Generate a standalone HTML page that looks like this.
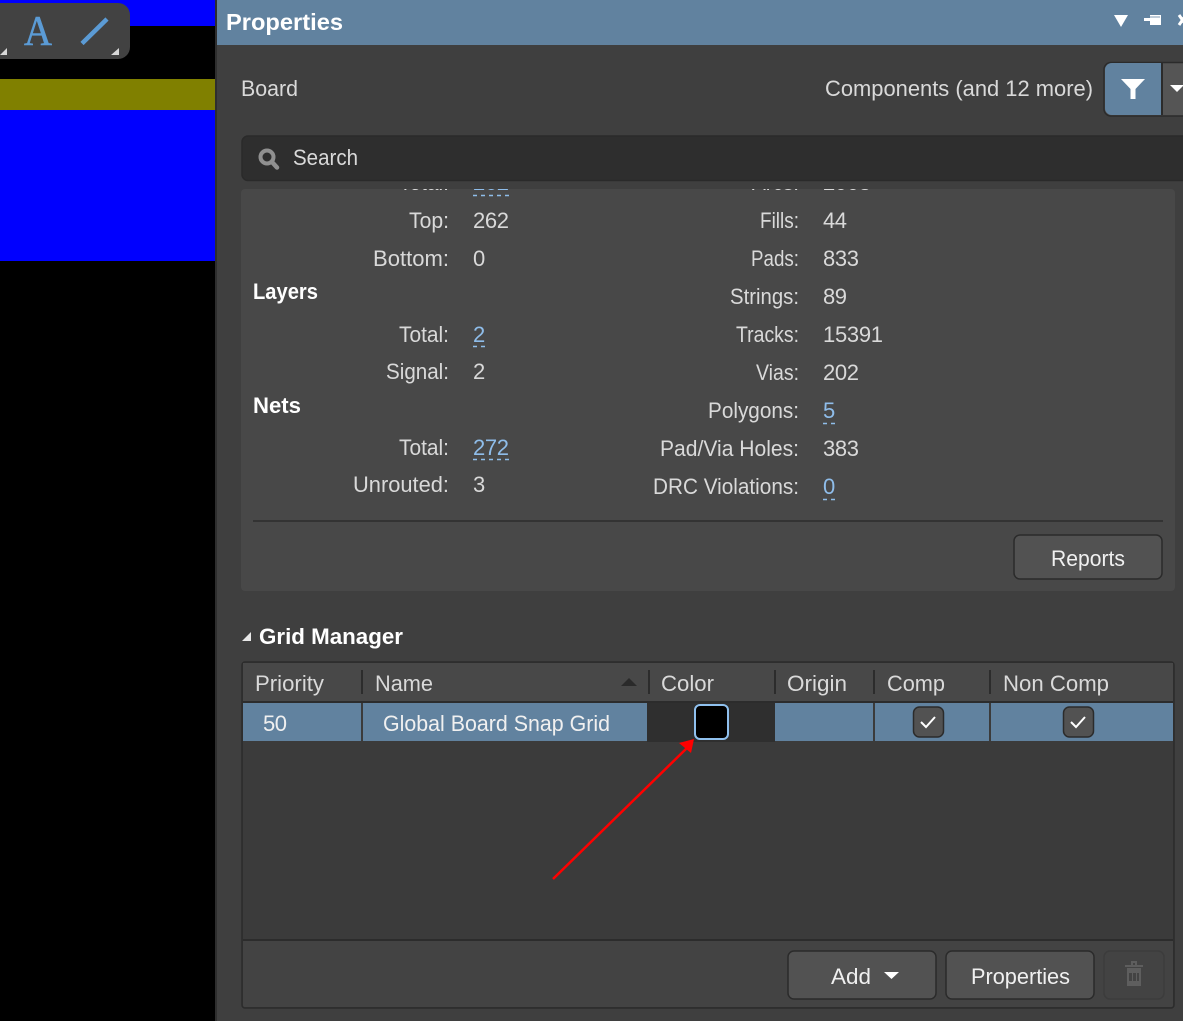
<!DOCTYPE html>
<html><head><meta charset="utf-8"><style>
html,body{margin:0;padding:0;background:#000;width:1183px;height:1021px;overflow:hidden}
svg{display:block}
text{font-family:"Liberation Sans",sans-serif;font-size:22px;fill:#d9d9d9}
.e{text-anchor:end}
.b{font-weight:bold;fill:#fff}
.l{fill:#8fbdea}
.w{fill:#f0f0f0}
</style></head><body>
<svg width="1183" height="1021" viewBox="0 0 1183 1021" xmlns="http://www.w3.org/2000/svg">
<defs>
<clipPath id="c"><rect x="241" y="189" width="934" height="402"/></clipPath>
</defs>
<rect width="1183" height="1021" fill="#000"/>
<rect x="0" y="0" width="215" height="26" fill="#0000ff"/>
<rect x="0" y="79" width="215" height="31" fill="#808000"/>
<rect x="0" y="110" width="215" height="151" fill="#0000ff"/>
<rect x="-20" y="3" width="150" height="56" rx="12" fill="#424242"/>
<text x="24" y="45" style="font-family:'Liberation Serif',serif;font-size:42px;fill:#5b9bd5;stroke:#5b9bd5;stroke-width:.6" textLength="28" lengthAdjust="spacingAndGlyphs">A</text>
<path d="M82 43.500L107 19" stroke="#5b9bd5" stroke-width="4.500"/>
<path d="M0 55L7 48V55Z" fill="#d8d8d8"/>
<path d="M111 55L119 48V55Z" fill="#d8d8d8"/>

<rect x="215" y="0" width="968" height="1021" fill="#3f3f3f"/>
<rect x="215" y="0" width="2" height="1021" fill="#2e2e2e"/>
<rect x="217" y="0" width="966" height="45" fill="#61829f"/>
<text x="226" y="30" class="b" style="font-size:23px" textLength="117" lengthAdjust="spacingAndGlyphs">Properties</text>
<path d="M1114 15H1128L1121 27Z" fill="#fff"/>
<path d="M1144 18H1150V15H1161V25H1150V21H1144Z" fill="#fff"/>
<rect x="1150" y="16.500" width="10" height="1" fill="#7f9ab3"/>
<path d="M1179 15L1186 25M1186 15L1179 25" stroke="#fff" stroke-width="3"/>

<text x="241" y="96" textLength="57" lengthAdjust="spacingAndGlyphs">Board</text>
<text x="825" y="96" textLength="268" lengthAdjust="spacingAndGlyphs">Components (and 12 more)</text>
<rect x="1104" y="62.500" width="90" height="53.500" rx="7" fill="#555" stroke="#2b2b2b" stroke-width="1.500"/>
<path d="M1105 70a7 7 0 0 1 7-7H1161V115H1112a7 7 0 0 1-7-7Z" fill="#61829f"/>
<rect x="1161" y="63" width="2" height="52" fill="#2b2b2b"/>
<path d="M1121 79H1145L1135.500 89V99H1130.500V89Z" fill="#fff"/>
<path d="M1170 85H1184L1177 92Z" fill="#fff"/>

<rect x="242" y="136" width="960" height="44.500" rx="6" fill="#2e2e2e" stroke="#2a2a2a" stroke-width="1.500"/>
<circle cx="267" cy="157" r="6.500" fill="none" stroke="#909090" stroke-width="4"/>
<path d="M272 162L277 167.500" stroke="#909090" stroke-width="4.500" stroke-linecap="round"/>
<text x="293" y="165" textLength="65" lengthAdjust="spacingAndGlyphs">Search</text>

<rect x="241" y="189" width="934" height="402" rx="4" fill="#484848"/>
<g clip-path="url(#c)">
<text x="449" y="190" class="e" textLength="50" lengthAdjust="spacingAndGlyphs">Total:</text>
<text x="473" y="190" class="l" textLength="36">262</text>
<path d="M473 195.500H509" stroke="#8fbdea" stroke-width="1.500" stroke-dasharray="4 4"/>
<text x="799" y="190" class="e" textLength="47" lengthAdjust="spacingAndGlyphs">Arcs:</text>
<text x="823" y="190" textLength="48">2003</text>
</g>
<text x="449" y="228" class="e" textLength="40" lengthAdjust="spacingAndGlyphs">Top:</text>
<text x="473" y="228" textLength="36">262</text>
<text x="449" y="266" class="e" textLength="76" lengthAdjust="spacingAndGlyphs">Bottom:</text>
<text x="473" y="266">0</text>
<text x="253" y="299" class="b" textLength="65" lengthAdjust="spacingAndGlyphs">Layers</text>
<text x="449" y="342" class="e" textLength="50" lengthAdjust="spacingAndGlyphs">Total:</text>
<text x="473" y="342" class="l">2</text>
<path d="M473 346.500H485" stroke="#8fbdea" stroke-width="1.500" stroke-dasharray="4 4"/>
<text x="449" y="379" class="e" textLength="63" lengthAdjust="spacingAndGlyphs">Signal:</text>
<text x="473" y="379">2</text>
<text x="253" y="413" class="b" textLength="48" lengthAdjust="spacingAndGlyphs">Nets</text>
<text x="449" y="455" class="e" textLength="50" lengthAdjust="spacingAndGlyphs">Total:</text>
<text x="473" y="455" class="l" textLength="36">272</text>
<path d="M473 459.500H509" stroke="#8fbdea" stroke-width="1.500" stroke-dasharray="4 4"/>
<text x="449" y="492" class="e" textLength="96" lengthAdjust="spacingAndGlyphs">Unrouted:</text>
<text x="473" y="492">3</text>

<text x="799" y="228" class="e" textLength="39" lengthAdjust="spacingAndGlyphs">Fills:</text>
<text x="823" y="228" textLength="24">44</text>
<text x="799" y="266" class="e" textLength="48" lengthAdjust="spacingAndGlyphs">Pads:</text>
<text x="823" y="266" textLength="36">833</text>
<text x="799" y="304" class="e" textLength="69" lengthAdjust="spacingAndGlyphs">Strings:</text>
<text x="823" y="304" textLength="24">89</text>
<text x="799" y="342" class="e" textLength="63" lengthAdjust="spacingAndGlyphs">Tracks:</text>
<text x="823" y="342" textLength="60">15391</text>
<text x="799" y="380" class="e" textLength="43" lengthAdjust="spacingAndGlyphs">Vias:</text>
<text x="823" y="380" textLength="36">202</text>
<text x="799" y="418" class="e" textLength="91" lengthAdjust="spacingAndGlyphs">Polygons:</text>
<text x="823" y="418" class="l">5</text>
<path d="M823 423.500H835" stroke="#8fbdea" stroke-width="1.500" stroke-dasharray="4 4"/>
<text x="799" y="456" class="e" textLength="139" lengthAdjust="spacingAndGlyphs">Pad/Via Holes:</text>
<text x="823" y="456" textLength="36">383</text>
<text x="799" y="494" class="e" textLength="146" lengthAdjust="spacingAndGlyphs">DRC Violations:</text>
<text x="823" y="494" class="l">0</text>
<path d="M823 499.500H835" stroke="#8fbdea" stroke-width="1.500" stroke-dasharray="4 4"/>

<rect x="253" y="520" width="910" height="2" fill="#333"/>
<rect x="1014" y="535" width="148" height="44" rx="6" fill="#525252" stroke="#2b2b2b" stroke-width="1.500"/>
<text x="1051" y="566" class="w" textLength="74" lengthAdjust="spacingAndGlyphs">Reports</text>

<path d="M242 641L251 632V641Z" fill="#e8e8e8"/>
<text x="259" y="644" class="b" textLength="144" lengthAdjust="spacingAndGlyphs">Grid Manager</text>

<rect x="242" y="662" width="932" height="346" rx="3" fill="#3b3b3b" stroke="#2b2b2b" stroke-width="1.500"/>
<rect x="243" y="663" width="930" height="38" fill="#484848"/>
<rect x="243" y="701" width="930" height="2" fill="#2c2c2c"/>
<rect x="243" y="703" width="118" height="38" fill="#61829f"/>
<rect x="363" y="703" width="284" height="38" fill="#61829f"/>
<rect x="647" y="703" width="128" height="39" fill="#2f2f2f"/>
<rect x="775" y="703" width="98" height="38" fill="#61829f"/>
<rect x="875" y="703" width="114" height="38" fill="#61829f"/>
<rect x="991" y="703" width="182" height="38" fill="#61829f"/>
<g fill="#2c2c2c">
<rect x="361" y="670" width="2" height="24"/>
<rect x="648" y="670" width="2" height="24"/>
<rect x="774" y="670" width="2" height="24"/>
<rect x="873" y="670" width="2" height="24"/>
<rect x="989" y="670" width="2" height="24"/>
</g>
<path d="M621 686L629 678L637 686Z" fill="#2a2a2a"/>
<text x="255" y="691" textLength="69" lengthAdjust="spacingAndGlyphs">Priority</text>
<text x="375" y="691" textLength="58" lengthAdjust="spacingAndGlyphs">Name</text>
<text x="661" y="691" textLength="53" lengthAdjust="spacingAndGlyphs">Color</text>
<text x="787" y="691" textLength="60" lengthAdjust="spacingAndGlyphs">Origin</text>
<text x="887" y="691" textLength="58" lengthAdjust="spacingAndGlyphs">Comp</text>
<text x="1003" y="691" textLength="106" lengthAdjust="spacingAndGlyphs">Non Comp</text>
<text x="263" y="731" class="w" textLength="24">50</text>
<text x="383" y="731" class="w" textLength="227" lengthAdjust="spacingAndGlyphs">Global Board Snap Grid</text>

<rect x="695" y="705" width="33" height="34" rx="5" fill="#000" stroke="#8fc0ee" stroke-width="2"/>
<rect x="913.500" y="707" width="30" height="30" rx="6" fill="#525252" stroke="#2b2b2b" stroke-width="1.500"/>
<path d="M921 722L926 727L935 717" fill="none" stroke="#fff" stroke-width="2"/>
<rect x="1063.500" y="707" width="30" height="30" rx="6" fill="#525252" stroke="#2b2b2b" stroke-width="1.500"/>
<path d="M1071 722L1076 727L1085 717" fill="none" stroke="#fff" stroke-width="2"/>

<path d="M553 879L688 747" stroke="#ff0000" stroke-width="2.500"/>
<path d="M694 739L679 743L691 753Z" fill="#ff0000"/>

<rect x="243" y="939" width="930" height="2" fill="#2c2c2c"/>
<path d="M243 941H1173V1005a2 2 0 0 1-2 2H245a2 2 0 0 1-2-2Z" fill="#434343"/>
<rect x="788" y="951" width="148" height="48" rx="6" fill="#525252" stroke="#2b2b2b" stroke-width="1.500"/>
<text x="831" y="984" class="w" textLength="40" lengthAdjust="spacingAndGlyphs">Add</text>
<path d="M884 972H899L891.500 979Z" fill="#fff"/>
<rect x="946" y="951" width="148" height="48" rx="6" fill="#525252" stroke="#2b2b2b" stroke-width="1.500"/>
<text x="971" y="984" class="w" textLength="99" lengthAdjust="spacingAndGlyphs">Properties</text>
<rect x="1104" y="951" width="60" height="48" rx="6" fill="#434343" stroke="#3c3c3c" stroke-width="1.500"/>
<path d="M1125 965H1143V967H1125ZM1131 961H1137V965H1135V963H1133V965H1131Z" fill="#5e5e5e"/>
<path d="M1127 968H1141V986H1127ZM1129 973V981H1132V973ZM1133 973V981H1136V973ZM1137 973V981H1139V973Z" fill="#5e5e5e" fill-rule="evenodd"/>
</svg>
</body></html>
